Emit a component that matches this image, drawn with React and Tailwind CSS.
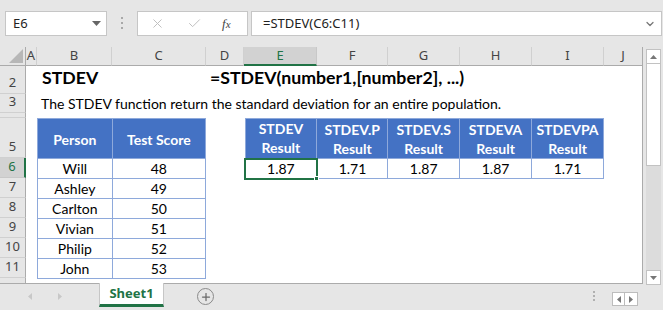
import { X, Check, ChevronDown, Plus } from 'lucide-react'

const FONT = { fontFamily: 'Lato, "Open Sans", sans-serif' }
const UI_FONT = { fontFamily: '"Noto Sans", "Open Sans", sans-serif' }

const cols = ['A', 'B', 'C', 'D', 'E', 'F', 'G', 'H', 'I', 'J']
const rowLabels = ['', '2', '3', '', '5', '6', '7', '8', '9', '10', '11', '']

const people = [
  ['Will', '48'],
  ['Ashley', '49'],
  ['Carlton', '50'],
  ['Vivian', '51'],
  ['Philip', '52'],
  ['John', '53'],
]

const results = [
  ['STDEV', '1.87'],
  ['STDEV.P', '1.71'],
  ['STDEV.S', '1.87'],
  ['STDEVA', '1.87'],
  ['STDEVPA', '1.71'],
]

function FormulaBar() {
  return (
    <div className="flex h-[47px] items-start bg-[#e6e6e6] pt-[11px]" style={UI_FONT}>
      <div className="ml-[5px] flex h-[25px] w-[102px] items-center justify-between border border-[#c6c6c6] bg-white pl-[7px] pr-[5px] text-[13px] text-[#222]">
        <span>E6</span>
        <svg width="9" height="5" viewBox="0 0 9 5"><polygon points="0,0 9,0 4.5,5" fill="#666" /></svg>
      </div>
      <div className="ml-[14px] mt-[6px] flex w-[3px] flex-col gap-[3px]">
        <span className="h-[2px] w-[2px] bg-[#a8a8a8]" />
        <span className="h-[2px] w-[2px] bg-[#a8a8a8]" />
        <span className="h-[2px] w-[2px] bg-[#a8a8a8]" />
      </div>
      <div className="ml-[13px] flex h-[25px] w-[111px] items-center border border-[#c6c6c6] bg-white">
        <X className="ml-[12px] text-[#c0c0c0]" size={15} strokeWidth={1.6} />
        <Check className="ml-[22px] text-[#c0c0c0]" size={15} strokeWidth={1.6} />
        <span className="ml-[20px] text-[13px] italic text-[#444]" style={{ fontFamily: '"Liberation Serif", serif' }}>
          f<span className="text-[11px]">x</span>
        </span>
      </div>
      <div className="ml-[3px] flex h-[25px] w-[411px] items-center justify-between border border-[#c6c6c6] bg-white pl-[11px] pr-[5px] text-[13px] text-[#222]">
        <span>=STDEV(C6:C11)</span>
        <ChevronDown className="text-[#777]" size={12} strokeWidth={2.5} />
      </div>
    </div>
  )
}

function ColumnHeaders() {
  return (
    <>
      <div className="col-start-1 row-start-1 flex items-end justify-end border-r border-b border-[#ababab] bg-[#e6e6e6] p-[2px]">
        <svg width="14" height="14" viewBox="0 0 14 14"><polygon points="14,0 14,14 0,14" fill="#b7b7b7" /></svg>
      </div>
      {cols.map((c, i) => (
        <div
          key={c}
          className={
            c === 'E'
              ? 'row-start-1 flex items-center justify-center border-r border-b-2 border-r-[#c8c8c8] border-b-[#217346] bg-[#d2d2d2] text-[13px] text-[#217346]'
              : 'row-start-1 flex items-center justify-center border-r border-b border-r-[#d0d0d0] border-b-[#ababab] bg-[#e6e6e6] text-[13px] text-[#444]'
          }
          style={{ gridColumnStart: i + 2 }}
        >
          {c}
        </div>
      ))}
    </>
  )
}

function RowHeaders() {
  return rowLabels.map((r, i) => (
    <div
      key={i}
      className={
        r === '6'
          ? 'col-start-1 flex items-end justify-center border-r-2 border-b border-r-[#217346] border-b-[#c8c8c8] bg-[#d2d2d2] pb-[1px] text-[13px] text-[#217346]'
          : 'col-start-1 flex items-end justify-center border-r border-b border-r-[#ababab] border-b-[#d0d0d0] bg-[#e6e6e6] pb-[1px] text-[13px] text-[#444]'
      }
      style={{ gridRowStart: i + 2 }}
    >
      {r}
    </div>
  ))
}

function PeopleTable() {
  return (
    <div className="col-start-3 col-span-2 row-start-6 row-span-7 self-start">
      <table className="border-collapse text-[14px] text-black" style={FONT}>
        <thead>
          <tr className="h-[40px] bg-[#4472c4] text-white">
            <th className="w-[75px] border border-[#8ea9db] pt-[2px] font-bold">Person</th>
            <th className="w-[94px] border border-[#8ea9db] pt-[2px] font-bold">Test Score</th>
          </tr>
        </thead>
        <tbody>
          {people.map(([name, score]) => (
            <tr key={name} className="h-[20px]">
              <td className="border border-[#8ea9db] p-0 text-center leading-[18px]">{name}</td>
              <td className="border border-[#8ea9db] p-0 text-center leading-[18px]">{score}</td>
            </tr>
          ))}
        </tbody>
      </table>
    </div>
  )
}

function ResultsTable() {
  return (
    <div className="relative col-start-6 col-span-5 row-start-6 row-span-2 self-start">
      <table className="border-collapse text-[14px] text-black" style={FONT}>
        <thead>
          <tr className="h-[40px] bg-[#4472c4] text-white">
            {results.map(([name], i) => (
              <th
                key={name}
                className={
                  i === 1
                    ? 'w-[71px] border border-[#8ea9db] p-0 font-bold leading-[19px]'
                    : 'w-[72px] border border-[#8ea9db] p-0 font-bold leading-[19px]'
                }
              >
                {name}
                <br />
                Result
              </th>
            ))}
          </tr>
        </thead>
        <tbody>
          <tr className="h-[20px]">
            {results.map(([name, value], i) => (
              <td
                key={name}
                className={
                  i === 0
                    ? 'border-2 border-[#217346] p-0 text-center leading-[16px]'
                    : 'border border-[#8ea9db] p-0 text-center leading-[18px]'
                }
              >
                {value}
              </td>
            ))}
          </tr>
        </tbody>
      </table>
      <span className="absolute left-[70px] top-[58px] h-[5px] w-[5px] border border-white bg-[#217346]" />
    </div>
  )
}

function VerticalScroll() {
  return (
    <div className="ml-[3px] mt-[2px] flex h-[236px] w-[15px] flex-col bg-[#dcdcdc]">
      <div className="flex h-[15px] items-center justify-center border border-[#c2c2c2] bg-white">
        <svg width="7" height="4" viewBox="0 0 7 4"><polygon points="0,4 7,4 3.5,0" fill="#777" /></svg>
      </div>
      <div className="h-[102px] border-x border-b border-[#c2c2c2] bg-white" />
      <div className="flex-1" />
      <div className="flex h-[15px] items-center justify-center border border-[#c2c2c2] bg-white">
        <svg width="7" height="4" viewBox="0 0 7 4"><polygon points="0,0 7,0 3.5,4" fill="#777" /></svg>
      </div>
    </div>
  )
}

function TabBar() {
  return (
    <div className="flex h-[26px] items-start bg-[#e6e6e6]" style={UI_FONT}>
      <div className="ml-[28px] mt-[9px] flex gap-[26px]">
        <svg width="4" height="7" viewBox="0 0 4 7"><polygon points="4,0 4,7 0,3.5" fill="#c8c8c8" /></svg>
        <svg width="4" height="7" viewBox="0 0 4 7"><polygon points="0,0 0,7 4,3.5" fill="#c8c8c8" /></svg>
      </div>
      <div className="-mt-px ml-[37px] flex h-[24px] w-[65px] items-center justify-center border-x border-[#c6c6c6] border-b-[3px] border-b-[#217346] bg-white pt-[1px] text-[13px] font-bold text-[#217346]">
        Sheet1
      </div>
      <div className="ml-[33px] mt-[4px] flex h-[17px] w-[17px] items-center justify-center rounded-full border-[1.5px] border-[#8a8a8a]">
        <Plus className="text-[#6a6a6a]" size={12} strokeWidth={2.5} />
      </div>
      <div className="ml-[379px] mt-[7px] flex flex-col gap-[2px]">
        <span className="h-[2px] w-[2px] bg-[#b0b0b0]" />
        <span className="h-[2px] w-[2px] bg-[#b0b0b0]" />
        <span className="h-[2px] w-[2px] bg-[#b0b0b0]" />
      </div>
      <div className="ml-[17px] mt-[8px] flex h-[14px]">
        <div className="flex w-[13px] items-center justify-center border border-[#bcbcbc] bg-white">
          <svg width="4" height="7" viewBox="0 0 4 7"><polygon points="4,0 4,7 0,3.5" fill="#777" /></svg>
        </div>
        <div className="flex w-[13px] items-center justify-center border border-l-0 border-[#bcbcbc] bg-white">
          <svg width="4" height="7" viewBox="0 0 4 7"><polygon points="0,0 0,7 4,3.5" fill="#777" /></svg>
        </div>
      </div>
    </div>
  )
}

export default function App() {
  return (
    <div className="h-[310px] w-[663px] overflow-hidden bg-[#e6e6e6]">
      <FormulaBar />
      <div className="flex h-[237px]">
        <div className="grid w-[643px] grid-cols-[26px_11px_75px_94px_38px_73px_71px_72px_72px_72px_39px] grid-rows-[19px_1px_27px_19px_5px_40px_20px_20px_20px_20px_20px_20px_6px] overflow-hidden border-r border-b border-[#ababab] bg-white" style={UI_FONT}>
          <ColumnHeaders />
          <RowHeaders />
          <div className="col-start-3 col-span-9 row-start-3 flex items-end pb-[2px] pl-[5px] text-[17.7px] font-bold text-black" style={FONT}>
            <span className="w-[168px]">STDEV</span>
            <span>=STDEV(number1,[number2], ...)</span>
          </div>
          <div className="col-start-3 col-span-9 row-start-4 flex items-end pl-[4px] text-[14px] leading-[18px] text-black" style={FONT}>
            The STDEV function return the standard deviation for an entire population.
          </div>
          <PeopleTable />
          <ResultsTable />
        </div>
        <VerticalScroll />
      </div>
      <TabBar />
    </div>
  )
}
